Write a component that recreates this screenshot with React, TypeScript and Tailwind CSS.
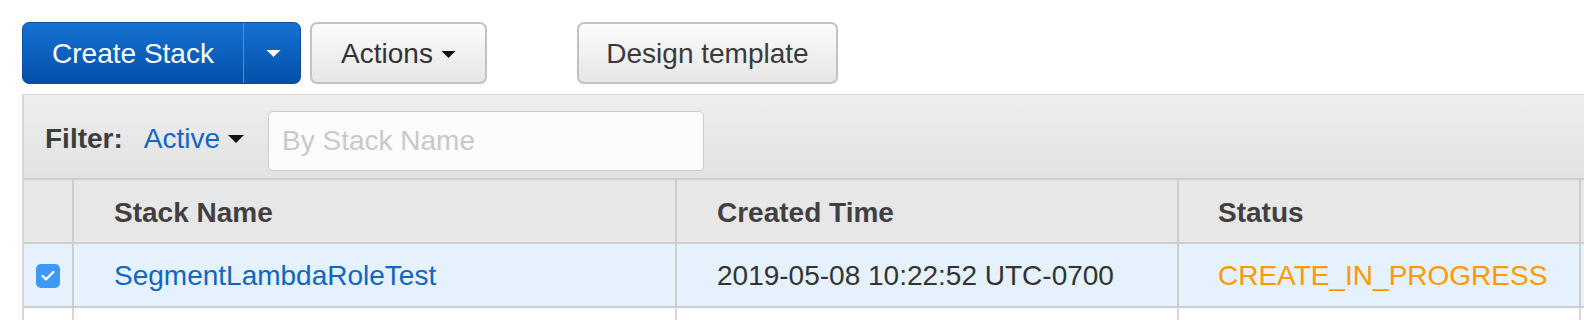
import { Check } from 'lucide-react';

const cols = 'grid grid-cols-[50px_603px_502px_402px_1fr]';

/** Small solid down-pointing caret used by dropdown buttons. */
function Caret({ className }: { className: string }) {
  return (
    <svg viewBox="0 0 16 8" className={className} aria-hidden="true">
      <path d="M0 0h16L8 8z" fill="currentColor" />
    </svg>
  );
}

export default function App() {
  return (
    <div className="w-[1584px] h-[320px] overflow-hidden bg-white font-['Liberation_Sans',Arial,sans-serif] text-[28px]">
      {/* toolbar */}
      <div className="flex items-center pl-[22px] pt-[22px]">
        <div className="flex h-[62px] w-[279px] rounded-[7px] border border-[#0a4f9f] bg-linear-to-b from-[#1772d3] to-[#0350a9] text-white">
          <button className="flex w-[220px] items-center justify-center pt-[2px] leading-none">Create Stack</button>
          <div className="w-px bg-[#4f8fd8]" />
          <button className="flex flex-1 items-center justify-center pl-[3px]">
            <Caret className="w-[15px] h-[7px] text-white" />
          </button>
        </div>
        <button className="ml-[9px] flex h-[62px] w-[177px] items-center justify-center gap-[8px] rounded-[7px] border-2 border-[#c2c2c2] bg-linear-to-b from-[#fcfcfc] to-[#e6e6e6] pt-[2px] text-[#333]">
          Actions
          <Caret className="w-[15px] h-[7px] text-[#111]" />
        </button>
        <button className="ml-[90px] flex h-[62px] w-[261px] items-center justify-center rounded-[7px] border-2 border-[#c2c2c2] bg-linear-to-b from-[#fcfcfc] to-[#e6e6e6] pt-[2px] text-[#3a3a3a]">
          Design template
        </button>
      </div>

      {/* panel */}
      <div className="ml-[22px] mt-[10px] border-l-2 border-[#d6d6d6]">
        <div className="flex h-[84px] items-start border-t border-[#d8d8d8] bg-linear-to-b from-[#eeeeee] to-[#e2e2e2] pl-[21px] pt-[16px]">
          <div className="flex h-[60px] items-center">
            <span className="mb-[4px] font-bold text-[#3d3d3d]">Filter:</span>
            <span className="mb-[4px] ml-[21px] text-[#1166c2]">Active</span>
            <Caret className="mb-[4px] ml-[8px] w-[16px] h-[8px] text-[#111]" />
            <div className="ml-[24px] flex h-[60px] w-[436px] items-center rounded-[5px] border border-[#cdcdcd] bg-[#fcfcfc] pl-[13px] text-[#c9c9c9]">
              By Stack Name
            </div>
          </div>
        </div>

        <div className={`${cols} h-[66px] border-y-2 border-[#cdcdcd] bg-[#e7e7e7] font-bold text-[#404040]`}>
          <div className="border-r-2 border-[#cdcdcd]" />
          <div className="flex items-center border-r-2 border-[#cdcdcd] px-[40px] pt-[3px]">Stack Name</div>
          <div className="flex items-center border-r-2 border-[#cdcdcd] px-[40px] pt-[3px]">Created Time</div>
          <div className="flex items-center border-r-2 border-[#cdcdcd] px-[39px] pt-[3px]">Status</div>
          <div />
        </div>

        <div className={`${cols} h-[64px] border-b-2 border-[#cdcdcd] bg-[#e5f1fc]`}>
          <div className="flex items-center justify-center border-r-2 border-[#cdcdcd]">
            <span className="mt-[2px] flex h-[24px] w-[24px] items-center justify-center rounded-[5px] bg-[#3d99f6]">
              <Check className="w-[16px] h-[16px] text-white" strokeWidth={3.5} />
            </span>
          </div>
          <div className="flex items-center border-r-2 border-[#cdcdcd] px-[40px] pt-[2px] text-[#1166c2]">SegmentLambdaRoleTest</div>
          <div className="flex items-center border-r-2 border-[#cdcdcd] px-[40px] pt-[2px] text-[#333]">2019-05-08 10:22:52 UTC-0700</div>
          <div className="flex items-center border-r-2 border-[#cdcdcd] px-[39px] pt-[2px] text-[#ff9900]">CREATE_IN_PROGRESS</div>
          <div />
        </div>

        <div className={`${cols} h-[20px]`}>
          <div className="border-r-2 border-[#d6d6d6]" />
          <div className="border-r-2 border-[#d6d6d6]" />
          <div className="border-r-2 border-[#d6d6d6]" />
          <div className="border-r-2 border-[#d6d6d6]" />
          <div />
        </div>
      </div>
    </div>
  );
}
